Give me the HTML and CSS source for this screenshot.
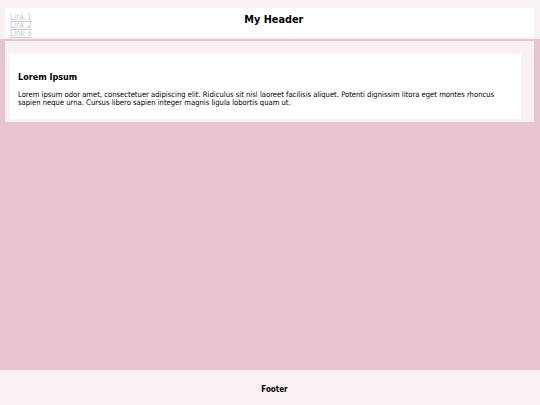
FILE: index.html
```html
<!DOCTYPE html>
<html>
<head>
<meta charset="utf-8">
<link rel="stylesheet" href="styles.css">
</head>
<body>
<div class="page">
  <header class="top">
    <div class="bar">
      <nav class="links">
        <a href="#">Link 1</a>
        <a href="#">Link 2</a>
        <a href="#">Link 3</a>
      </nav>
      <h1 class="title">My Header</h1>
    </div>
  </header>
  <main class="content">
    <section class="card">
      <h2 class="card-title">Lorem Ipsum</h2>
      <p class="card-text">Lorem ipsum odor amet, consectetuer adipiscing elit. Ridiculus sit nisl laoreet facilisis aliquet. Potenti dignissim litora eget montes rhoncus sapien neque urna. Cursus libero sapien integer magnis ligula lobortis quam ut.</p>
    </section>
  </main>
  <div class="spacer"></div>
  <footer class="foot">Footer</footer>
</div>
</body>
</html>
```

FILE: styles.css
```css
html, body {
  margin: 0;
  padding: 0;
}
body {
  background: #e8c6cf;
  font-family: "DejaVu Sans Condensed", "DejaVu Sans", Verdana, sans-serif;
  color: #000;
}
.page {
  display: flex;
  flex-direction: column;
  min-height: 405px;
}
.top {
  background: #f9f1f4;
  padding: 8px 6px 2px 5px;
  border-bottom: 2px solid #e8c6cf;
}
.bar {
  background: #ffffff;
  height: 29px;
  display: flex;
  align-items: flex-start;
  padding-left: 5px;
}
.links {
  display: flex;
  flex-direction: column;
  padding-top: 6px;
  font-size: 8px;
  line-height: 8px;
}
.links a {
  color: #c6c4f6;
  text-decoration: underline;
}
.title {
  flex: 1;
  margin: 0 18px 0 0;
  padding-top: 5px;
  text-align: center;
  font-size: 10.8px;
  line-height: 14px;
  font-weight: bold;
}
.content {
  margin: 0 6px 0 5px;
  background: #f9f1f4;
  padding: 13px 13px 3px 5px;
}
.card {
  background: #ffffff;
  padding: 17px 24px 12px 8px;
}
.card-title {
  margin: 0 0 8px 0;
  font-size: 9px;
  line-height: 12px;
  font-weight: bold;
}
.card-text {
  margin: 0;
  font-size: 7.6px;
  line-height: 8px;
}
.spacer {
  flex: 1;
}
.foot {
  background: #f9f1f4;
  height: 35px;
  box-sizing: border-box;
  display: flex;
  align-items: center;
  justify-content: center;
  padding: 3px 0 0 9px;
  font-size: 8px;
  font-weight: bold;
}
```
